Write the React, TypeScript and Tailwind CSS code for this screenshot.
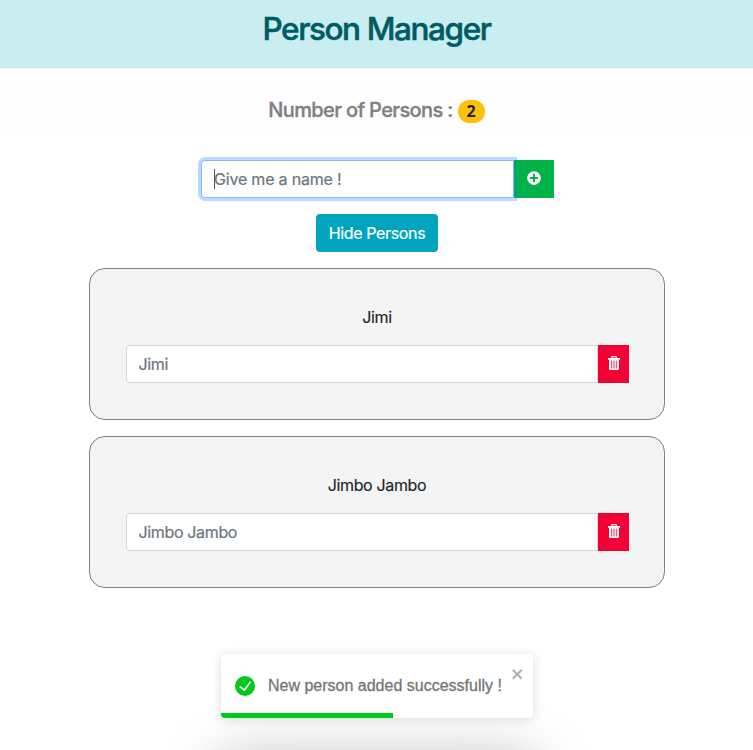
import React from "react";
import { FaPlusCircle } from "react-icons/fa";

function TrashIcon() {
  return (
    <svg className="relative -top-px left-[0.5px]" viewBox="0 0 14 16" width="14" height="16" fill="none">
      <path d="M4.7 3.2V2.3Q4.7 1.6 5.4 1.6h3.2Q9.3 1.6 9.3 2.3v.9" stroke="currentColor" strokeWidth="1.1" />
      <path d="M1 3h12v1.8H1z" fill="currentColor" />
      <path d="M2 4.5h10v9q0 1.5-1.5 1.5h-7Q2 15 2 13.5z" fill="currentColor" />
      <path d="M4.7 5.6v7.8M7 5.6v7.8M9.3 5.6v7.8" stroke="#f50035" strokeWidth="0.85" />
    </svg>
  );
}

function PersonCard({ name }: { name: string }) {
  return (
    <section className="flex h-[152px] w-[576px] flex-col items-center rounded-[16px] border border-[#808080] bg-[#f4f4f4] pl-9 pr-[35px] pt-9">
      <p className="h-6 tracking-[-0.35px] text-[#212529] [-webkit-text-stroke:0.15px_#212529]">{name}</p>
      <div className="mt-4 flex h-[38px] w-[503px]">
        <input
          type="text"
          placeholder={name}
          className="h-[38px] min-w-0 flex-1 rounded-l-[4px] border border-[#ced4da] bg-white px-3 tracking-[-0.35px] text-[#495057] outline-none [-webkit-text-stroke:0.2px_#6c757d] placeholder:text-[#6c757d]"
        />
        <button className="flex w-[31px] items-center justify-center bg-[#f50035] text-white">
          <TrashIcon />
        </button>
      </div>
    </section>
  );
}

function Toast() {
  return (
    <div className="absolute left-[221px] top-[654px] flex h-16 w-[312px] items-center rounded-[4px] bg-white pl-[14px] font-['Liberation_Sans',sans-serif] shadow-[0_1px_10px_rgba(0,0,0,0.1),0_2px_15px_rgba(0,0,0,0.05)]">
      <svg viewBox="0 0 24 24" width="20" height="20" fill="#00c91b">
        <path d="M12 0a12 12 0 1012 12A12.014 12.014 0 0012 0zm6.927 8.2l-6.845 9.289a1.011 1.011 0 01-1.43.188l-4.888-3.908a1 1 0 111.25-1.562l4.076 3.261 6.227-8.451a1 1 0 111.61 1.183z" />
      </svg>
      <span className="ml-[13px] whitespace-nowrap text-base leading-6 text-[#757575] [-webkit-text-stroke:0.3px_#757575]">New person added successfully !</span>
      <svg className="absolute right-2 top-3 opacity-30" viewBox="0 0 14 16" width="14" height="16">
        <path fillRule="evenodd" d="M7.71 8.23l3.75 3.75-1.48 1.48-3.75-3.75-3.75 3.75L1 11.98l3.75-3.75L1 4.48 2.48 3l3.75 3.75L9.98 3l1.48 1.48-3.75 3.75z" />
      </svg>
      <div className="absolute bottom-0 left-0 h-[5px] w-[172px] rounded-bl-[4px] bg-[#00c91b]" />
    </div>
  );
}

export default function App() {
  return (
    <div className="relative h-[750px] w-[753px] overflow-hidden bg-white font-['Inter',sans-serif] text-base leading-6">
      <header className="flex h-[68px] justify-center border-b border-[#b8e7ec] bg-[#c9edf1] pt-[10px]">
        <h1 className="text-[31.5px] font-medium leading-[38px] tracking-[-1.4px] text-[#005b66] [-webkit-text-stroke:0.5px_#005b66]">Person Manager</h1>
      </header>
      <div className="mt-4 flex h-[52px] items-center justify-center bg-[#fefefe]">
        <h2 className="flex items-center text-[20px] font-medium leading-6 tracking-[-0.63px] text-[#818182]">
          <span className="[-webkit-text-stroke:0.35px_#818182]">Number of Persons :</span>
          <span className="relative top-px ml-[5px] flex h-[23px] w-[27px] items-center justify-center rounded-full bg-[#ffc107] font-['Noto_Sans',sans-serif] text-base font-bold leading-none tracking-normal text-[#212529]">2</span>
        </h2>
      </div>
      <main className="flex flex-col items-center pt-6">
        <div className="ml-[2px] flex h-[38px] w-[353px]">
          <div className="relative z-10 w-[313px] rounded-l-[4px] border border-[#80bdff] bg-white pl-3 leading-9 text-[#6c757d] shadow-[0_0_0_3px_rgba(0,123,255,0.27)]">
            <span className="absolute left-3 top-2 h-5 w-px bg-[#495057]" />
            <span className="tracking-[-0.2px] [-webkit-text-stroke:0.2px_#6c757d]">Give me a name !</span>
          </div>
          <button className="flex w-10 items-center justify-center bg-[#00b248] text-white">
            <FaPlusCircle size={14} className="relative -top-px" />
          </button>
        </div>
        <button className="mt-4 h-[38px] w-[122px] rounded-[4px] bg-[#00a5bd] pl-px tracking-[-0.35px] text-white [-webkit-text-stroke:0.2px_#ffffff]">Hide Persons</button>
        <div className="mt-4 flex flex-col gap-4">
          <PersonCard name="Jimi" />
          <PersonCard name="Jimbo Jambo" />
        </div>
      </main>
      <div className="absolute left-[221px] top-[765px] h-16 w-[312px] rounded-[4px] shadow-[0_0_60px_rgba(0,0,0,0.35)]" />
      <Toast />
    </div>
  );
}
